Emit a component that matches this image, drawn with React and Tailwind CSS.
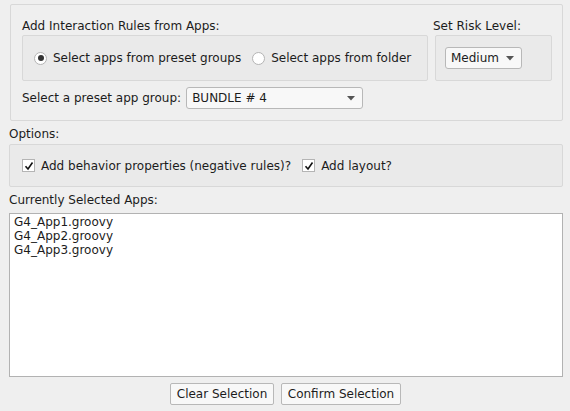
import React from 'react';

const Arrow = () => (
  <svg width="8" height="5" viewBox="0 0 8 5" className="shrink-0">
    <path d="M0 0 L8 0 L4 4.5 Z" fill="#555" />
  </svg>
);

function Radio({ checked, label }) {
  return (
    <div className="flex items-center gap-[6px]">
      <span className="w-[13px] h-[13px] rounded-full border border-[#b4b4b4] bg-white flex items-center justify-center">
        {checked && <span className="w-[6px] h-[6px] rounded-full bg-[#333]" />}
      </span>
      <span>{label}</span>
    </div>
  );
}

function Check({ label }) {
  return (
    <div className="flex items-center gap-[6px]">
      <span className="w-[13px] h-[13px] border border-[#b4b4b4] bg-white flex items-center justify-center">
        <svg width="10" height="10" viewBox="0 0 10 10">
          <path d="M1.5 5.2 L4 8 L8.5 1.5" stroke="#111" strokeWidth="1.6" fill="none" />
        </svg>
      </span>
      <span>{label}</span>
    </div>
  );
}

export default function App() {
  return (
    <div className="w-[570px] h-[411px] bg-[#efefef] text-[#1c1c1c] text-[12px] leading-[14px] overflow-hidden" style={{ fontFamily: '"DejaVu Sans", sans-serif' }}>
      <div className="mt-[4px] ml-[10px] w-[553px] h-[117px] border border-[#d8d8d8] rounded-[2px] pt-[14px] pl-[11px]">
        <div className="flex">
          <div className="w-[406px]">
            <div className="h-[16px]">Add Interaction Rules from Apps:</div>
            <div className="h-[46px] border border-[#d8d8d8] rounded-[2px] bg-[#eaeaea] flex items-center gap-[11px] pl-[11px]">
              <Radio checked label="Select apps from preset groups" />
              <Radio label="Select apps from folder" />
            </div>
          </div>
          <div className="ml-[5px]">
            <div className="h-[16px]">Set Risk Level:</div>
            <div className="ml-[2px] w-[117px] h-[46px] border border-[#d8d8d8] rounded-[2px] bg-[#eaeaea] pt-[11px] pl-[9px]">
              <div className="w-[77px] h-[22px] border border-[#b8b8b8] rounded-[3px] bg-[#f8f8f8] flex items-center justify-between pl-[5px] pr-[7px]">
                <span>Medium</span>
                <Arrow />
              </div>
            </div>
          </div>
        </div>
        <div className="flex items-center mt-[6px] gap-[5px]">
          <span>Select a preset app group:</span>
          <div className="w-[177px] h-[22px] border border-[#b8b8b8] rounded-[3px] bg-[#f8f8f8] flex items-center justify-between pl-[5px] pr-[7px]">
            <span>BUNDLE # 4</span>
            <Arrow />
          </div>
        </div>
      </div>

      <div className="ml-[9px] mt-[6px] h-[17px]">Options:</div>
      <div className="ml-[9px] w-[554px] h-[43px] border border-[#d8d8d8] rounded-[2px] bg-[#eaeaea] flex items-center gap-[11px] pl-[12px]">
        <Check label="Add behavior properties (negative rules)?" />
        <Check label="Add layout?" />
      </div>

      <div className="ml-[9px] mt-[6px] h-[20px]">Currently Selected Apps:</div>
      <div className="ml-[9px] w-[554px] h-[164px] border border-[#b2b2b2] bg-white pt-[1px] pl-[4px]">
        <div>G4_App1.groovy</div>
        <div>G4_App2.groovy</div>
        <div>G4_App3.groovy</div>
      </div>

      <div className="flex justify-center gap-[7px] mt-[6px] pl-[1px]">
        <button className="w-[104px] h-[22px] border border-[#b8b8b8] rounded-[2px] bg-[#f8f8f8]">Clear Selection</button>
        <button className="w-[120px] h-[22px] border border-[#b8b8b8] rounded-[2px] bg-[#f8f8f8]">Confirm Selection</button>
      </div>
    </div>
  );
}
